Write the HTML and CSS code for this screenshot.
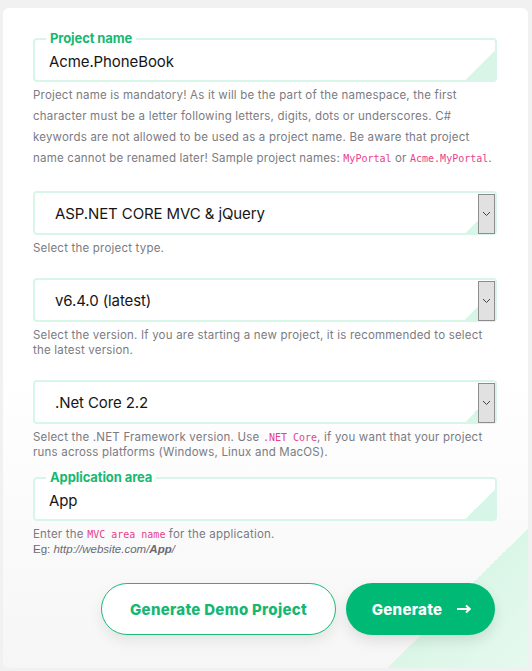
FILE: index.html
```html
<!DOCTYPE html>
<html lang="en">
<head>
<meta charset="utf-8">
<title>New project</title>
<link rel="stylesheet" href="styles.css">
</head>
<body>
<div class="card">
  <div class="field">
    <div class="box">
      <span class="legend">Project name</span>
      <span class="value value-input">Acme.PhoneBook</span>
    </div>
    <p class="help help-tall">Project name is mandatory! As it will be the part of the namespace, the first character must be a letter following letters, digits, dots or underscores. C# keywords are not allowed to be used as a project name. Be aware that project name cannot be renamed later! Sample project names: <code>MyPortal</code> or <code>Acme.MyPortal</code>.</p>
  </div>

  <div class="field">
    <div class="box">
      <span class="value value-select">ASP.NET CORE MVC &amp; jQuery</span>
      <span class="arrow"><svg width="9" height="6" viewBox="0 0 9 6"><path d="M1 1l3.5 3.5L8 1" fill="none" stroke="#444" stroke-width="1"/></svg></span>
    </div>
    <p class="help">Select the project type.</p>
  </div>

  <div class="field">
    <div class="box">
      <span class="value value-select">v6.4.0 (latest)</span>
      <span class="arrow"><svg width="9" height="6" viewBox="0 0 9 6"><path d="M1 1l3.5 3.5L8 1" fill="none" stroke="#444" stroke-width="1"/></svg></span>
    </div>
    <p class="help">Select the version. If you are starting a new project, it is recommended to select the latest version.</p>
  </div>

  <div class="field">
    <div class="box">
      <span class="value value-select">.Net Core 2.2</span>
      <span class="arrow"><svg width="9" height="6" viewBox="0 0 9 6"><path d="M1 1l3.5 3.5L8 1" fill="none" stroke="#444" stroke-width="1"/></svg></span>
    </div>
    <p class="help">Select the .NET Framework version. Use <code>.NET Core</code>, if you want that your project runs across platforms (Windows, Linux and MacOS).</p>
  </div>

  <div class="field field-area">
    <div class="box">
      <span class="legend">Application area</span>
      <span class="value value-input">App</span>
    </div>
    <p class="help">Enter the <code>MVC area name</code> for the application.<br><span class="eg">Eg: <i>http://website.com/<b>App</b>/</i></span></p>
  </div>

  <div class="actions">
    <button class="btn btn-outline">Generate Demo Project</button>
    <button class="btn btn-primary">Generate <svg class="btn-arrow" width="14" height="10" viewBox="0 0 14 10"><path d="M0 5h12.5M9 1.5L12.8 5 9 8.5" fill="none" stroke="#fff" stroke-width="2"/></svg></button>
  </div>
</div>
</body>
</html>
```

FILE: styles.css
```css
* { box-sizing: border-box; }

html, body {
  margin: 0;
  background: #f1f1f2;
  font-family: "Inter", "Open Sans", sans-serif;
}

body {
  padding: 8px 4px 3px 3px;
}

.card {
  position: relative;
  height: 660px;
  border-radius: 6px;
  padding: 30px 31px 0 30px;
  background:
    linear-gradient(to bottom right, rgba(220,247,233,0) 50%, #daf6e7 50%, #e6f9ef 100%) right bottom / 140px 140px no-repeat,
    linear-gradient(to bottom, #ffffff 55%, #f6f6f7 100%);
}

.field + .field { margin-top: 22px; }
.field-area { margin-top: 17px !important; }

.box {
  position: relative;
  display: flex;
  align-items: stretch;
  height: 44px;
  border: 2px solid #d8f6e7;
  border-radius: 4px;
  background: #fff;
}

.box::after {
  content: "";
  position: absolute;
  right: 0;
  bottom: 0;
  width: 30px;
  height: 30px;
  background: linear-gradient(to bottom right, transparent 50%, #d8f6e7 50%);
}

.legend {
  position: absolute;
  left: 11px;
  top: -9px;
  padding: 0 4px;
  background: #fff;
  color: #18b872;
  font-size: 13px;
  font-weight: 700;
  line-height: 15px;
  letter-spacing: -0.1px;
}

.value {
  flex: 1;
  display: flex;
  align-items: center;
  color: #161618;
  font-size: 15px;
  letter-spacing: -0.1px;
}

.value-input { padding: 3px 0 0 14px; }
.value-select { padding-left: 20px; }

.arrow {
  position: relative;
  z-index: 1;
  display: flex;
  align-items: center;
  justify-content: center;
  width: 17px;
  margin: 1px 0 0 0;
  height: 40px;
  background: #e1e1e1;
  border: 1px solid #8d8d8d;
}

.help {
  margin: 6px 0 0;
  color: #7b7b82;
  font-size: 11.5px;
  line-height: 15px;
  letter-spacing: 0.2px;
}

.help-tall {
  margin-top: 3px;
  line-height: 21px;
}

code {
  font-family: "DejaVu Sans Mono", "Liberation Mono", monospace;
  font-size: 10px;
  letter-spacing: 0;
  color: #e83e8c;
}

.eg {
  font-family: "Liberation Sans", Arial, sans-serif;
  font-size: 11.5px;
  letter-spacing: 0;
  color: #6a6a70;
}

.actions {
  display: flex;
  justify-content: flex-end;
  gap: 10px;
  margin-top: 26px;
  padding-right: 2px;
}

.btn {
  display: flex;
  align-items: center;
  justify-content: center;
  height: 52px;
  border-radius: 26px;
  font-family: "Inter", sans-serif;
  font-size: 15px;
  font-weight: 800;
  letter-spacing: 0.3px;
  cursor: pointer;
}

.btn-outline {
  width: 235px;
  background: #fff;
  color: #16b772;
  border: 1px solid #1cbb78;
  box-shadow: 0 6px 14px rgba(0,0,0,0.08);
}

.btn-primary {
  width: 149px;
  padding-left: 8px;
  background: #00b974;
  color: #fff;
  border: none;
  box-shadow: 0 6px 14px rgba(0,0,0,0.1);
}

.btn-arrow {
  margin-left: 15px;
}
```
